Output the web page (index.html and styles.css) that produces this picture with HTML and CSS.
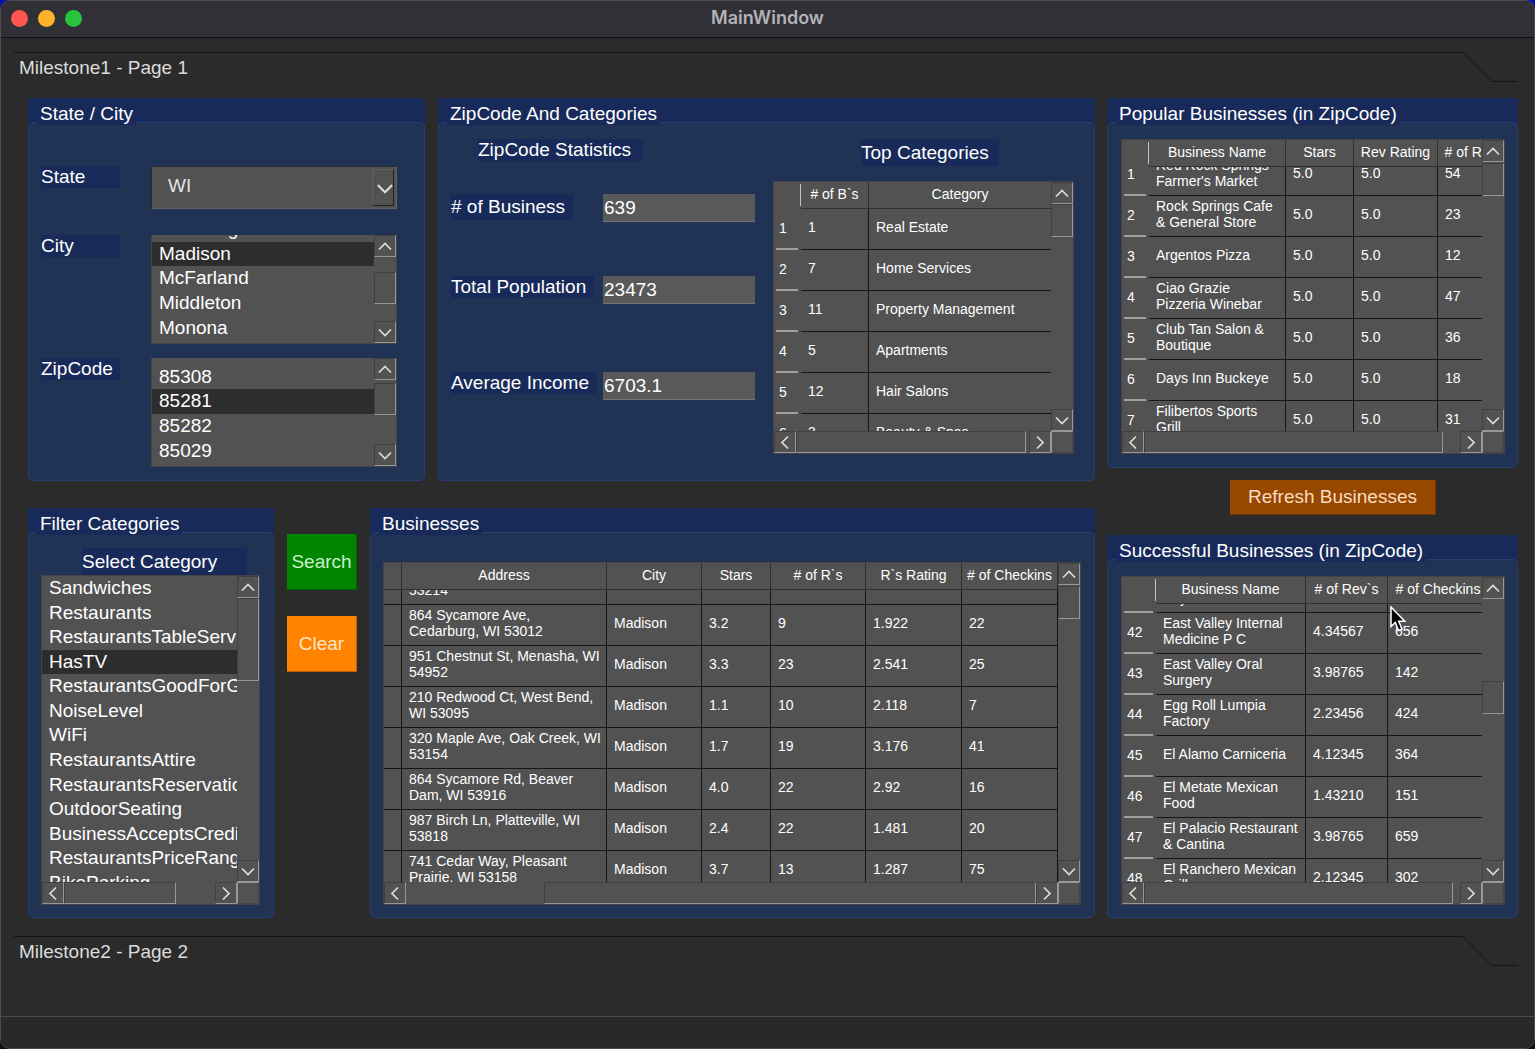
FILE: index.html
```html
<!DOCTYPE html>
<html lang="en">
<head>
<meta charset="utf-8">
<meta name="viewport" content="width=device-width, initial-scale=1">
<title>MainWindow</title>
<link rel="stylesheet" href="styles.css">
</head>
<body>
<svg class="symbols" aria-hidden="true">
  <symbol id="up" viewBox="0 0 20 20"><path d="M4 13.500L10 7.500L16 13.500"/></symbol>
  <symbol id="down" viewBox="0 0 20 20"><path d="M4 7.500L10 13.500L16 7.500"/></symbol>
  <symbol id="left" viewBox="0 0 20 20"><path d="M13 4.500L7 10.500L13 16.500"/></symbol>
  <symbol id="right" viewBox="0 0 20 20"><path d="M7 4.500L13 10.500L7 16.500"/></symbol>
</svg>
<div class="window">
  <header class="titlebar">
    <div class="lights">
      <button class="light close" aria-label="Close"></button>
      <button class="light minimize" aria-label="Minimize"></button>
      <button class="light zoom" aria-label="Zoom"></button>
    </div>
    <h1>MainWindow</h1>
  </header>

  <main>
    <div class="page-tab">
      <button class="page-name">Milestone1 - Page 1</button>
      <svg class="page-edge" viewBox="0 0 55 30" aria-hidden="true"><path d="M0 .5L28.500 29.500H55"/></svg>
    </div>

    <div class="page">
      <div class="main-column">
        <div class="row-top">
          <section class="group">
            <h2><span>State / City</span></h2>
            <div class="group-body state-body">
              <div class="pick-row">
                <label class="tag" for="state">State</label>
                <div class="combo">
                  <select id="state"><option>WI</option></select>
                  <span class="combo-arrow"><svg><use href="#down"/></svg></span>
                </div>
              </div>
              <div class="pick-row">
                <span class="tag" id="city-label">City</span>
                <div class="scroller">
                  <div class="view list-end">
                    <ul class="list five" role="listbox" aria-labelledby="city-label">
                      <li role="option">Fitchburg</li>
                      <li role="option" class="selected" aria-selected="true">Madison</li>
                      <li role="option">McFarland</li>
                      <li role="option">Middleton</li>
                      <li role="option">Monona</li>
                    </ul>
                  </div>
                  <div class="vbar">
                    <button class="arrow" aria-label="Scroll up"><svg><use href="#up"/></svg></button>
                    <div class="track" style="grid-template-rows:15fr 32fr 17fr"><span class="thumb"></span></div>
                    <button class="arrow" aria-label="Scroll down"><svg><use href="#down"/></svg></button>
                  </div>
                </div>
              </div>
              <div class="pick-row">
                <span class="tag" id="zip-label">ZipCode</span>
                <div class="scroller">
                  <div class="view list-end">
                    <ul class="list five" role="listbox" aria-labelledby="zip-label">
                      <li role="option">85032</li>
                      <li role="option">85308</li>
                      <li role="option" class="selected" aria-selected="true">85281</li>
                      <li role="option">85282</li>
                      <li role="option">85029</li>
                    </ul>
                  </div>
                  <div class="vbar">
                    <button class="arrow" aria-label="Scroll up"><svg><use href="#up"/></svg></button>
                    <div class="track" style="grid-template-rows:3fr 32fr 29fr"><span class="thumb"></span></div>
                    <button class="arrow" aria-label="Scroll down"><svg><use href="#down"/></svg></button>
                  </div>
                </div>
              </div>
            </div>
          </section>

          <section class="group">
            <h2><span>ZipCode And Categories</span></h2>
            <div class="group-body zip-body">
              <div class="stats">
                <h3 class="tag stats-title">ZipCode Statistics</h3>
                <div class="stat-rows">
                  <div class="stat"><label class="tag" for="business">#&nbsp;of&nbsp;Business</label><input id="business" value="639"></div>
                  <div class="stat"><label class="tag" for="population">Total&nbsp;Population</label><input id="population" value="23473"></div>
                  <div class="stat"><label class="tag" for="income">Average&nbsp;Income</label><input id="income" value="6703.1"></div>
                </div>
              </div>
              <div class="categories">
                <h3 class="tag tall categories-title">Top Categories</h3>
                <div class="scroller both">
                  <div class="view">
                    <table class="grid">
                      <colgroup><col class="w27"><col class="w68"><col></colgroup>
                      <thead><tr><td class="corner"></td><th scope="col"># of B`s</th><th scope="col">Category</th></tr></thead>
                      <tbody>
                        <tr><th scope="row">1</th><td>1</td><td>Real Estate</td></tr>
                        <tr><th scope="row">2</th><td>7</td><td>Home Services</td></tr>
                        <tr><th scope="row">3</th><td>11</td><td>Property Management</td></tr>
                        <tr><th scope="row">4</th><td>5</td><td>Apartments</td></tr>
                        <tr><th scope="row">5</th><td>12</td><td>Hair Salons</td></tr>
                        <tr><th scope="row">6</th><td>3</td><td>Beauty &amp; Spas</td></tr>
                      </tbody>
                    </table>
                  </div>
                  <div class="vbar">
                    <button class="arrow" aria-label="Scroll up"><svg><use href="#up"/></svg></button>
                    <div class="track" style="grid-template-rows:0fr 33fr 173fr"><span class="thumb"></span></div>
                    <button class="arrow" aria-label="Scroll down"><svg><use href="#down"/></svg></button>
                  </div>
                  <div class="hbar">
                    <button class="arrow" aria-label="Scroll left"><svg><use href="#left"/></svg></button>
                    <div class="track" style="grid-template-columns:0fr 230fr 3fr"><span class="thumb"></span></div>
                    <button class="arrow" aria-label="Scroll right"><svg><use href="#right"/></svg></button>
                  </div>
                  <span class="size-corner"></span>
                </div>
              </div>
            </div>
          </section>
        </div>

        <div class="row-bottom">
          <section class="group">
            <h2><span>Filter Categories</span></h2>
            <div class="group-body filter-body">
              <h3 class="tag tall filter-title" id="filter-label">Select Category</h3>
              <div class="scroller both">
                <div class="view">
                  <ul class="list thirteen" role="listbox" aria-labelledby="filter-label">
                    <li role="option">Sandwiches</li>
                    <li role="option">Restaurants</li>
                    <li role="option">RestaurantsTableService</li>
                    <li role="option" class="selected" aria-selected="true">HasTV</li>
                    <li role="option">RestaurantsGoodForGroups</li>
                    <li role="option">NoiseLevel</li>
                    <li role="option">WiFi</li>
                    <li role="option">RestaurantsAttire</li>
                    <li role="option">RestaurantsReservations</li>
                    <li role="option">OutdoorSeating</li>
                    <li role="option">BusinessAcceptsCreditCards</li>
                    <li role="option">RestaurantsPriceRange2</li>
                    <li role="option">BikeParking</li>
                  </ul>
                </div>
                <div class="vbar">
                  <button class="arrow" aria-label="Scroll up"><svg><use href="#up"/></svg></button>
                  <div class="track" style="grid-template-rows:0fr 83fr 179fr"><span class="thumb"></span></div>
                  <button class="arrow" aria-label="Scroll down"><svg><use href="#down"/></svg></button>
                </div>
                <div class="hbar">
                  <button class="arrow" aria-label="Scroll left"><svg><use href="#left"/></svg></button>
                  <div class="track" style="grid-template-columns:0fr 112fr 39fr"><span class="thumb"></span></div>
                  <button class="arrow" aria-label="Scroll right"><svg><use href="#right"/></svg></button>
                </div>
                <span class="size-corner"></span>
              </div>
            </div>
          </section>

          <div class="actions">
            <button class="action search">Search</button>
            <button class="action clear">Clear</button>
          </div>

          <section class="group">
            <h2><span>Businesses</span></h2>
            <div class="group-body businesses-body">
              <div class="scroller both">
                <div class="view" data-scroll-top="26">
                  <table class="grid lined">
                    <colgroup><col class="w18"><col class="w205"><col class="w95"><col class="w69"><col class="w95"><col class="w96"><col class="w96"></colgroup>
                    <thead><tr><td></td><th scope="col">Address</th><th scope="col">City</th><th scope="col">Stars</th><th scope="col"># of R`s</th><th scope="col">R`s Rating</th><th scope="col"># of Checkins</th></tr></thead>
                    <tbody>
                      <tr><td></td><td>West Allis, WI<br>53214</td><td></td><td></td><td></td><td></td><td></td></tr>
                      <tr><td></td><td>864 Sycamore Ave,<br>Cedarburg, WI 53012</td><td>Madison</td><td>3.2</td><td>9</td><td>1.922</td><td>22</td></tr>
                      <tr><td></td><td>951 Chestnut St, Menasha, WI<br>54952</td><td>Madison</td><td>3.3</td><td>23</td><td>2.541</td><td>25</td></tr>
                      <tr><td></td><td>210 Redwood Ct, West Bend,<br>WI 53095</td><td>Madison</td><td>1.1</td><td>10</td><td>2.118</td><td>7</td></tr>
                      <tr><td></td><td>320 Maple Ave, Oak Creek, WI<br>53154</td><td>Madison</td><td>1.7</td><td>19</td><td>3.176</td><td>41</td></tr>
                      <tr><td></td><td>864 Sycamore Rd, Beaver<br>Dam, WI 53916</td><td>Madison</td><td>4.0</td><td>22</td><td>2.92</td><td>16</td></tr>
                      <tr><td></td><td>987 Birch Ln, Platteville, WI<br>53818</td><td>Madison</td><td>2.4</td><td>22</td><td>1.481</td><td>20</td></tr>
                      <tr><td></td><td>741 Cedar Way, Pleasant<br>Prairie, WI 53158</td><td>Madison</td><td>3.7</td><td>13</td><td>1.287</td><td>75</td></tr>
                    </tbody>
                  </table>
                </div>
                <div class="vbar">
                  <button class="arrow" aria-label="Scroll up"><svg><use href="#up"/></svg></button>
                  <div class="track" style="grid-template-rows:1fr 33fr 241fr"><span class="thumb"></span></div>
                  <button class="arrow" aria-label="Scroll down"><svg><use href="#down"/></svg></button>
                </div>
                <div class="hbar">
                  <button class="arrow" aria-label="Scroll left"><svg><use href="#left"/></svg></button>
                  <div class="track" style="grid-template-columns:138fr 492fr 0fr"><span class="thumb"></span></div>
                  <button class="arrow" aria-label="Scroll right"><svg><use href="#right"/></svg></button>
                </div>
                <span class="size-corner"></span>
              </div>
            </div>
          </section>
        </div>
      </div>

      <div class="side-column">
        <section class="group">
          <h2><span>Popular Businesses (in ZipCode)</span></h2>
          <div class="group-body popular-body">
            <div class="scroller both">
              <div class="view" data-scroll-top="12">
                <table class="grid wide-popular">
                  <colgroup><col class="w27"><col><col class="w68"><col class="w84"><col class="w62"></colgroup>
                  <thead><tr><td class="corner"></td><th scope="col">Business Name</th><th scope="col">Stars</th><th scope="col">Rev Rating</th><th scope="col"># of R`s</th></tr></thead>
                  <tbody>
                    <tr><th scope="row">1</th><td>Red Rock Springs<br>Farmer's Market</td><td>5.0</td><td>5.0</td><td>54</td></tr>
                    <tr><th scope="row">2</th><td>Rock Springs Cafe<br>&amp; General Store</td><td>5.0</td><td>5.0</td><td>23</td></tr>
                    <tr><th scope="row">3</th><td>Argentos Pizza</td><td>5.0</td><td>5.0</td><td>12</td></tr>
                    <tr><th scope="row">4</th><td>Ciao Grazie<br>Pizzeria Winebar</td><td>5.0</td><td>5.0</td><td>47</td></tr>
                    <tr><th scope="row">5</th><td>Club Tan Salon &amp;<br>Boutique</td><td>5.0</td><td>5.0</td><td>36</td></tr>
                    <tr><th scope="row">6</th><td>Days Inn Buckeye</td><td>5.0</td><td>5.0</td><td>18</td></tr>
                    <tr><th scope="row">7</th><td>Filibertos Sports<br>Grill</td><td>5.0</td><td>5.0</td><td>31</td></tr>
                  </tbody>
                </table>
              </div>
              <div class="vbar">
                <button class="arrow" aria-label="Scroll up"><svg><use href="#up"/></svg></button>
                <div class="track" style="grid-template-rows:1fr 33fr 213fr"><span class="thumb"></span></div>
                <button class="arrow" aria-label="Scroll down"><svg><use href="#down"/></svg></button>
              </div>
              <div class="hbar">
                <button class="arrow" aria-label="Scroll left"><svg><use href="#left"/></svg></button>
                <div class="track" style="grid-template-columns:0fr 299fr 17fr"><span class="thumb"></span></div>
                <button class="arrow" aria-label="Scroll right"><svg><use href="#right"/></svg></button>
              </div>
              <span class="size-corner"></span>
            </div>
          </div>
        </section>

        <button class="action refresh">Refresh Businesses</button>

        <section class="group">
          <h2><span>Successful Businesses (in ZipCode)</span></h2>
          <div class="group-body successful-body">
            <div class="scroller both">
              <div class="view" data-scroll-top="32">
                <table class="grid wide-successful">
                  <colgroup><col class="w34"><col><col class="w82"><col class="w100"></colgroup>
                  <thead><tr><td class="corner"></td><th scope="col">Business Name</th><th scope="col"># of Rev`s</th><th scope="col"># of Checkins</th></tr></thead>
                  <tbody>
                    <tr><th scope="row">41</th><td>Earth Fare Market<br>City</td><td></td><td></td></tr>
                    <tr><th scope="row">42</th><td>East Valley Internal<br>Medicine P C</td><td>4.34567</td><td>656</td></tr>
                    <tr><th scope="row">43</th><td>East Valley Oral<br>Surgery</td><td>3.98765</td><td>142</td></tr>
                    <tr><th scope="row">44</th><td>Egg Roll Lumpia<br>Factory</td><td>2.23456</td><td>424</td></tr>
                    <tr><th scope="row">45</th><td>El Alamo Carniceria</td><td>4.12345</td><td>364</td></tr>
                    <tr><th scope="row">46</th><td>El Metate Mexican<br>Food</td><td>1.43210</td><td>151</td></tr>
                    <tr><th scope="row">47</th><td>El Palacio Restaurant<br>&amp; Cantina</td><td>3.98765</td><td>659</td></tr>
                    <tr><th scope="row">48</th><td>El Ranchero Mexican<br>Grill</td><td>2.12345</td><td>302</td></tr>
                  </tbody>
                </table>
              </div>
              <div class="vbar">
                <button class="arrow" aria-label="Scroll up"><svg><use href="#up"/></svg></button>
                <div class="track" style="grid-template-rows:82fr 33fr 146fr"><span class="thumb"></span></div>
                <button class="arrow" aria-label="Scroll down"><svg><use href="#down"/></svg></button>
              </div>
              <div class="hbar">
                <button class="arrow" aria-label="Scroll left"><svg><use href="#left"/></svg></button>
                <div class="track" style="grid-template-columns:0fr 309fr 7fr"><span class="thumb"></span></div>
                <button class="arrow" aria-label="Scroll right"><svg><use href="#right"/></svg></button>
              </div>
              <span class="size-corner"></span>
            </div>
            <svg class="pointer" viewBox="0 0 16 26" aria-hidden="true"><path d="M1 1V20.500L5.300 16.500L8.600 24.500L12 23L8.700 15.300H14.800Z"/></svg>
          </div>
        </section>
      </div>
    </div>

    <div class="page-tab">
      <button class="page-name">Milestone2 - Page 2</button>
      <svg class="page-edge" viewBox="0 0 55 30" aria-hidden="true"><path d="M0 .5L28.500 29.500H55"/></svg>
    </div>
  </main>

  <footer class="statusbar"></footer>
</div>
<script src="script.js"></script>
</body>
</html>
```
FILE: styles.css
```css
* { box-sizing: border-box; }

body {
  margin: 0;
  background: linear-gradient(#0a10b0, #101010 40px);
  color: #fff;
  font: 19px/22px "Liberation Sans", Arial, sans-serif;
}

button, input, select { font: inherit; color: inherit; border-radius: 0; }
button { padding: 0; }
h1, h2, h3, ul { margin: 0; padding: 0; font: inherit; }

.symbols { position: absolute; width: 0; height: 0; }

.window {
  display: flex;
  flex-direction: column;
  min-height: 100vh;
  border: 1px solid #4c4c4e;
  border-radius: 10px;
  background: #2b2b2b;
  overflow: hidden;
}

/* Title bar */
.titlebar {
  display: grid;
  grid-template-columns: 1fr auto 1fr;
  align-items: center;
  height: 37px;
  padding: 0 10px 2px;
  background: #313036;
  border-bottom: 1px solid #0f0f12;
}
.titlebar h1 {
  color: #b4b3b7;
  font: 600 18px/24px Inter, sans-serif;
}
.lights { display: flex; gap: 10px; }
.light { width: 17px; height: 17px; border: 0; border-radius: 50%; }
.close { background: #ff5650; }
.minimize { background: #ffb32c; }
.zoom { background: #28c43b; }

main { flex: 1; padding-top: 14px; }

/* Toolbox page tabs */
.page-tab { display: flex; height: 30px; padding: 0 16px 0 13px; }
.page-name {
  flex: 1;
  border: 0;
  border-top: 1px solid #151515;
  padding: 0 5px;
  background: none;
  color: #dcdcdc;
  text-align: left;
}
.page-edge { width: 55px; height: 30px; fill: none; stroke: #151515; }

.page {
  display: grid;
  grid-template-columns: 1067fr 411fr;
  gap: 12px;
  padding: 16px 16px 18px 27px;
}
.main-column, .side-column { display: flex; flex-direction: column; min-width: 0; }
.main-column { gap: 27px; }
.row-top { display: grid; grid-template-columns: 397fr 657fr; gap: 13px; }
.row-bottom { display: grid; grid-template-columns: 246fr 70px 725fr; gap: 13px; }

/* Group boxes */
.group {
  display: flex;
  flex-direction: column;
  min-width: 0;
  background: linear-gradient(#182a59, #182a59) 0 0 / 100% 40px no-repeat;
}
.group h2 { position: relative; z-index: 1; height: 24px; padding-left: 9px; white-space: nowrap; }
.group h2 span { display: inline-block; padding: 5px 3px 0; background: #182a59; }
.group-body {
  flex: 1;
  border: 1px solid #243f72;
  border-radius: 5px;
  background: #203355;
}
.tag {
  display: block;
  justify-self: start;
  background: #182a59;
  line-height: 22px;
}
.tag.tall { line-height: 27px; }

/* State / City */
.state-body { display: flex; flex-direction: column; padding: 43px 27px 13px 12px; }
.pick-row { display: grid; grid-template-columns: 110px 1fr; align-items: start; }
.pick-row .tag { width: 79px; }
.pick-row:nth-child(2) { margin-top: 26px; }
.pick-row:nth-child(3) { margin-top: 14px; }
.pick-row .scroller { height: 109px; border-top: 0; }
.combo { position: relative; }
.combo select {
  display: block;
  width: 100%;
  height: 43px;
  padding: 0 30px 4px 16px;
  appearance: none;
  border: 1px solid;
  border-color: #2c2c2c #626262 #626262 #2c2c2c;
  background: #525252;
  color: #e4e4e4;
}
.combo-arrow {
  position: absolute;
  inset: 3px 3px 3px auto;
  display: grid;
  place-items: center;
  width: 22px;
  border: 1px solid;
  border-color: #606060 #222 #222 #606060;
  pointer-events: none;
}
.combo-arrow svg { width: 24px; height: 24px; }

/* Scroll areas */
.scroller {
  display: grid;
  grid-template-columns: minmax(0, 1fr) 22px;
  grid-template-rows: minmax(0, 1fr);
  border: 1px solid #444;
  background: #525252;
}
.scroller.both { grid-template-rows: minmax(0, 1fr) 22px; }
.view { overflow: hidden; }
.vbar { display: flex; flex-direction: column; }
.hbar { display: flex; }
.arrow, .thumb, .size-corner {
  border: 1px solid;
  border-color: #404040 #989898 #989898 #404040;
  background: #525252;
}
.arrow { display: grid; place-items: center; flex: none; width: 22px; height: 22px; }
.arrow svg { width: 20px; height: 20px; }
.scroller svg, .combo svg { fill: none; stroke: #dedede; stroke-width: 1.700; }
.size-corner { border-color: #989898 #444 #444 #989898; }
.track { display: grid; flex: 1; min-width: 0; min-height: 0; }
.vbar .thumb { grid-row: 2; }
.hbar .thumb { grid-column: 2; }

/* Lists */
.list { display: flex; flex-direction: column; list-style: none; }
.list li {
  display: flex;
  align-items: center;
  flex: 1;
  padding-left: 7px;
  line-height: 22px;
  white-space: nowrap;
}
.list .selected { background: #2d2d2d; }
.list-end { display: flex; flex-direction: column; justify-content: flex-end; padding-bottom: 3px; }
.five { flex: none; height: 123px; }
.thirteen { height: 319px; }

/* ZipCode and categories */
.zip-body { display: grid; grid-template-columns: 304fr 301fr; gap: 18px; padding: 16px 20px 0 12px; }
.stats-title { width: 165px; margin: 0 0 33px 27px; }
.stat-rows { display: grid; grid-template-rows: 82px 96px 28px; }
.stat { display: grid; grid-template-columns: 152px 1fr; align-items: start; }
.stat .tag { padding-right: 8px; }
.stat:first-child .tag { line-height: 26px; }
.stat input {
  width: 100%;
  min-width: 0;
  height: 28px;
  padding: 0 1px;
  border: 0;
  border-bottom: 1px solid #757575;
  background: #595959;
}
.categories-title { width: 138px; margin: 0 0 15px 88px; }
.categories .scroller { height: 273px; }

/* Filter */
.filter-body { padding: 15px 13px 12px 12px; }
.filter-title { width: 165px; margin-left: 41px; }
.filter-body .scroller { height: 330px; }

.actions { display: flex; flex-direction: column; gap: 26px; padding-top: 26px; }
.action { border: 1px solid rgba(0, 0, 0, .25); border-width: 0 1px 1px 0; }
.actions .action { height: 56px; }
.search { background: #008500; color: #c9f0c9; }
.clear { background: #ff8200; color: #ffe6c4; }
.refresh {
  align-self: flex-end;
  width: 206px;
  height: 35px;
  margin: 12px 82px 20px 0;
  background: #964700;
  color: #fbdcc0;
}

.businesses-body { padding: 29px 13px 12px 12px; }
.businesses-body .scroller { height: 343px; }
.popular-body { padding: 16px 12px 13px 13px; }
.popular-body .scroller { height: 315px; }
.successful-body { position: relative; padding: 16px 12px 12px 13px; }
.successful-body .scroller { height: 329px; }

/* Data grids */
.grid {
  width: 100%;
  table-layout: fixed;
  border-collapse: separate;
  border-spacing: 0;
  font-size: 14px;
  line-height: 16px;
}
.wide-popular { min-width: 378px; }
.wide-successful { min-width: 366px; }
.grid td, .grid th {
  overflow: hidden;
  padding: 0 0 5px 7px;
  border: solid #161616;
  border-width: 0 1px 1px 0;
  font-weight: 400;
  text-align: left;
  white-space: nowrap;
}
.grid tbody tr { height: 41px; }
.grid thead tr { height: 27px; }
.grid thead th, .grid thead td {
  position: sticky;
  top: 0;
  padding: 0 0 2px;
  border-color: #303030;
  background: #525252;
  text-align: center;
}
.grid:not(.lined) td:last-child, .grid:not(.lined) thead th:last-child { border-right: 0; }
.grid thead .corner {
  border: 0;
  background: linear-gradient(#c4c4c4, #c4c4c4) right 2px / 1px 22px no-repeat, #525252;
}
.grid tbody th {
  padding: 0 0 3px 5px;
  border: 0;
  background: linear-gradient(#a0a0a0, #a0a0a0) 2px 100% / calc(100% - 5px) 2px no-repeat;
}

.w18 { width: 18px; }
.w27 { width: 27px; }
.w34 { width: 34px; }
.w62 { width: 62px; }
.w68 { width: 68px; }
.w69 { width: 69px; }
.w82 { width: 82px; }
.w84 { width: 84px; }
.w95 { width: 95px; }
.w96 { width: 96px; }
.w100 { width: 100px; }
.w205 { width: 205px; }

.pointer {
  position: absolute;
  top: 46px;
  left: 282px;
  width: 16px;
  height: 26px;
  fill: #000;
  stroke: #fff;
  stroke-width: 1.500;
}

.statusbar { height: 32px; border-top: 1px solid #4a4a4a; background: #292929; }
```
FILE: script.js
```js
document.querySelectorAll("[data-scroll-top]").forEach(function (view) {
  view.scrollTop = Number(view.dataset.scrollTop);
});
```
